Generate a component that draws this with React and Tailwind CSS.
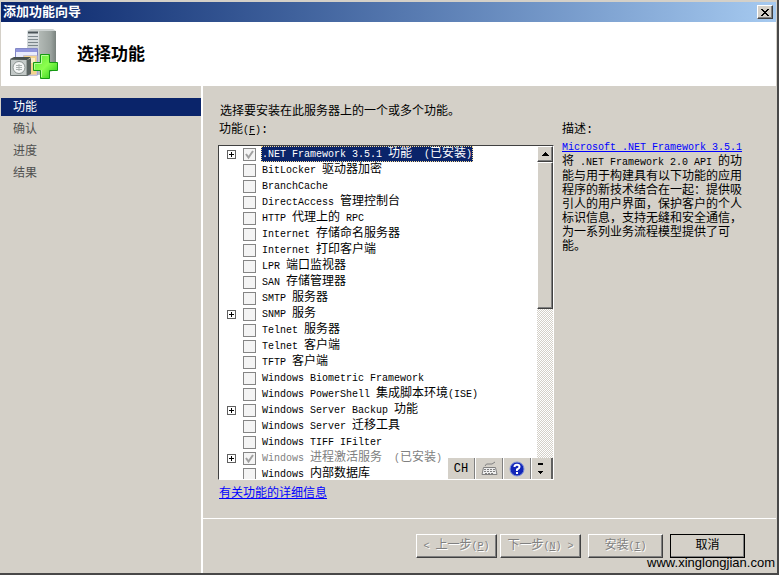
import React, { useState } from 'react';

const steps = ['功能', '确认', '进度', '结果'];

const features = [
    { name: '.NET Framework 3.5.1 功能  (已安装)', expandable: true, installed: true },
    { name: 'BitLocker 驱动器加密' },
    { name: 'BranchCache' },
    { name: 'DirectAccess 管理控制台' },
    { name: 'HTTP 代理上的 RPC' },
    { name: 'Internet 存储命名服务器' },
    { name: 'Internet 打印客户端' },
    { name: 'LPR 端口监视器' },
    { name: 'SAN 存储管理器' },
    { name: 'SMTP 服务器' },
    { name: 'SNMP 服务', expandable: true },
    { name: 'Telnet 服务器' },
    { name: 'Telnet 客户端' },
    { name: 'TFTP 客户端' },
    { name: 'Windows Biometric Framework' },
    { name: 'Windows PowerShell 集成脚本环境(ISE)' },
    { name: 'Windows Server Backup 功能', expandable: true },
    { name: 'Windows Server 迁移工具' },
    { name: 'Windows TIFF IFilter' },
    { name: 'Windows 进程激活服务  (已安装)', expandable: true, installed: true, dimmed: true },
    { name: 'Windows 内部数据库' },
];

// Latin runs are set smaller so that they take half the width of a Chinese character
const Mixed = ({ text }) =>
    text.split(/([\x20-\x7e]+)/).filter(Boolean).map((part, i) =>
        /^[\x20-\x7e]/.test(part) ? <span key={i} className="text-[10px]">{part}</span> : part
    );

const raised = 'border border-t-white border-l-white border-r-[#404040] border-b-[#404040] bg-[#d4d0c8] shadow-[inset_-1px_-1px_0_#808080]';

const ServerIcon = () => (
    <svg viewBox="0 0 50 50" className="w-[50px] h-[50px]" aria-hidden="true">
        <defs>
            <linearGradient id="side" x1="0" x2="1">
                <stop offset="0" stopColor="#b3bab6" />
                <stop offset="0.7" stopColor="#9aa29e" />
                <stop offset="1" stopColor="#79827e" />
            </linearGradient>
            <linearGradient id="front" x1="0" y1="0" x2="0" y2="1">
                <stop offset="0" stopColor="#dfe4e6" />
                <stop offset="1" stopColor="#b4bcc0" />
            </linearGradient>
            <linearGradient id="plus" x1="0" y1="0" x2="1" y2="1">
                <stop offset="0" stopColor="#5fe23a" />
                <stop offset="0.5" stopColor="#8cff4e" />
                <stop offset="1" stopColor="#1fc414" />
            </linearGradient>
        </defs>
        {/* tower */}
        <path d="M18 2 L30 1 V46 L18 43Z" fill="url(#front)" />
        <path d="M18 2 L22 0 H44 L47 2 L30 3Z" fill="#cdd3d2" />
        <path d="M30 2 L47 2 V41 L30 46Z" fill="url(#side)" />
        <path d="M19 3.500 H29" stroke="#4a5458" strokeWidth="2" />
        <path d="M19 7.500 H29 M19 10.500 H29 M19 13.500 H29 M19 16.500 H29" stroke="#7b868b" />
        {/* windows */}
        <path d="M6.500 19.500 H28.500 V46 H6.500Z" fill="#e9ecfd" stroke="#8388c6" />
        <rect x="7" y="20" width="21" height="3" fill="#9297dd" />
        <path d="M14.500 26.500 H28 V46 H14.500Z" fill="#f4d48c" stroke="#c9c3d6" />
        <path d="M17 29 H26 V34 H17Z" fill="#fbeec8" />
        {/* disc box */}
        <path d="M1.500 30.500 H18 V46.500 H1.500Z" fill="#c3c9c8" stroke="#6a7371" />
        <path d="M18 31 L22 29 V45 L18 47Z" fill="#5b6462" />
        <path d="M1 30 L5 28 H22 L18 31Z" fill="#48514f" />
        <circle cx="10" cy="38.500" r="6" fill="#f4f6f6" stroke="#89918f" />
        <path d="M7 36.500 H13 M7 38.500 H13 M7 40.500 H13 M10 35 V42" stroke="#aab1b0" />
        {/* plus */}
        <path d="M31.500 25.500 H40.500 V33.500 H48.500 V41.500 H40.500 V49.500 H31.500 V41.500 H24.500 V33.500 H31.500Z" fill="url(#plus)" stroke="#159a12" />
        <path d="M32.500 41 V48 M25.500 40.500 V34.500 H32.500 V26.500 H39" fill="none" stroke="#b8ff9a" />
    </svg>
);

const TitleBar = () => (
    <header className="h-5 shrink-0 flex items-center justify-between pl-[2px] pr-[3px] bg-linear-to-r from-[#0a246a] to-[#a6caf0]">
        <h1 className="pt-[2px] text-white text-[13px] font-bold leading-5">添加功能向导</h1>
        <button aria-label="关闭" className={`w-4 h-[14px] flex items-center justify-center ${raised}`}>
            <svg viewBox="0 0 8 7" className="w-2 h-[7px]" shapeRendering="crispEdges">
                <path d="M0 0h2v1h1v1h2V1h1V0h2v1H7v1H6v1H5v1h1v1h1v1h1v1H6V6H5V5H3v1H2v1H0V6h1V5h1V4h1V3H2V2H1V1H0z" fill="#000" />
            </svg>
        </button>
    </header>
);

const FeatureRow = ({ feature, id, selected, onSelect }) => (
    <li className="h-4 flex items-center">
        <span className="w-[24px] pl-2 flex">
            {feature.expandable && (
                <button aria-label="展开" className="w-[9px] h-[9px] border border-[#606060] bg-white flex items-center justify-center">
                    <svg viewBox="0 0 5 5" className="w-[5px] h-[5px] shrink-0" shapeRendering="crispEdges">
                        <path d="M0 2h5v1H0zM2 0h1v5H2z" fill="#000" />
                    </svg>
                </button>
            )}
        </span>
        <span className="grid w-[13px] h-[13px]">
            <input
                id={id}
                type="checkbox"
                defaultChecked={feature.installed}
                className="appearance-none w-[13px] h-[13px] border border-[#858585] bg-[#f4f4f4] col-start-1 row-start-1"
            />
            {feature.installed && (
                <svg viewBox="0 0 13 13" className="w-[13px] h-[13px] col-start-1 row-start-1 pointer-events-none">
                    <path d="M3 6 L5.500 9.500 L10 3" fill="none" stroke="#a0a0a0" strokeWidth="2" />
                </svg>
            )}
        </span>
        <label
            htmlFor={id}
            onClick={onSelect}
            className={`ml-[5px] px-px h-4 leading-4 whitespace-pre ${
                selected ? 'bg-[#0a246a] text-white outline-1 -outline-offset-1 outline-dotted outline-[#f5db95]' : feature.dimmed ? 'text-[#808080]' : 'text-black'
            }`}
        >
            <Mixed text={feature.name} />
        </label>
    </li>
);

const ScrollBar = () => (
    <div className="w-4 shrink-0 flex flex-col bg-[conic-gradient(#fff_25%,#d4d0c8_0_50%,#fff_0_75%,#d4d0c8_0)] bg-[length:2px_2px]">
        <button aria-label="向上滚动" className={`h-4 shrink-0 flex items-center justify-center ${raised}`}>
            <svg viewBox="0 0 7 4" className="w-[7px] h-1" shapeRendering="crispEdges">
                <path d="M3 0h1v1h1v1h1v1h1v1H0V3h1V2h1V1h1z" fill="#000" />
            </svg>
        </button>
        <div className={`h-[44%] ${raised}`}></div>
    </div>
);

const LanguageBar = () => (
    <div className="absolute right-0 bottom-0 h-[21px] flex bg-[#d4d0c8] border-l border-white">
        <button className="w-[27px] border-r border-[#808080]">CH</button>
        <button aria-label="键盘" className="w-7 border-l border-l-white border-r border-r-[#808080] flex items-center justify-center">
            <svg viewBox="0 0 17 15" className="w-[17px] h-[15px]" fill="none" stroke="#808080">
                <path d="M4 5 Q5 2 8 3 T14 1" />
                <path d="M2.500 6.500 H14.500 L16 13.500 H1Z" fill="#eee" />
                <path d="M3 8.500 H14 M3 10.500 H14 M4 12.500 H13" strokeDasharray="2 1" />
            </svg>
        </button>
        <button aria-label="帮助" className="w-7 border-l border-l-white border-r border-r-[#808080] flex items-center justify-center">
            <svg viewBox="0 0 16 16" className="w-4 h-4">
                <circle cx="8" cy="8" r="7" fill="#1226b8" stroke="#7c8fd8" />
                <path d="M5.500 6 Q5.500 3.700 8 3.700 T10.500 6 Q10.500 7.200 8 8.500 V10" fill="none" stroke="#fff" strokeWidth="2" />
                <rect x="7" y="11" width="2" height="2" fill="#fff" />
            </svg>
        </button>
        <button aria-label="选项" className="w-[22px] border-l border-l-white border-r-2 border-r-[#606060] flex items-center pl-[5px]">
            <svg viewBox="0 0 7 12" className="w-[7px] h-3" shapeRendering="crispEdges">
                <path d="M1 0h5v2H1zM1 8h5v1H5v1H4v1H3v-1H2V9H1z" fill="#000" />
            </svg>
        </button>
    </div>
);

const WizardButton = ({ children, className, ...rest }) => (
    <button
        className={`h-6 ${raised} disabled:text-[#808080] disabled:[text-shadow:1px_1px_0_#fff] whitespace-pre ${className}`}
        {...rest}
    >
        {children}
    </button>
);

const Key = ({ letter }) => <span className="text-[10px]">(<u>{letter}</u>)</span>;

export default function App() {
    const [selected, setSelected] = useState(0);

    return (
        <div className="h-screen flex flex-col overflow-hidden bg-[#d4d0c8] text-black text-[12px] leading-[14px] font-['Liberation_Mono','Noto_Sans_CJK_SC',monospace] pt-[2px] px-px border-r-2 border-b-2 border-[#484848]">
            <TitleBar />
            <div className="h-16 shrink-0 flex items-center bg-white pl-2">
                <ServerIcon />
                <h2 className="ml-[18px] pt-1 text-[17px] leading-6 font-bold">选择功能</h2>
            </div>

            <div className="flex-1 min-h-0 flex">
                <nav className="w-[200px] shrink-0 pt-3">
                    <ul className="space-y-1">
                        {steps.map((step, i) => (
                            <li key={step} className={`h-[18px] leading-5 pl-3 ${i === 0 ? 'bg-[#0a246a] text-white' : 'text-[#505050]'}`}>
                                {step}
                            </li>
                        ))}
                    </ul>
                </nav>

                <div className="flex-1 min-w-0 flex flex-col border-l-2 border-white">
                    <main className="flex-1 min-h-0 flex pl-[15px] pr-6">
                        <section className="w-[336px] shrink-0 flex flex-col pt-[17px]">
                            <p className="pl-[2px] leading-[18px]">选择要安装在此服务器上的一个或多个功能。</p>
                            <p id="features-label" className="pl-px leading-[18px]">功能<Key letter="F" />:</p>
                            <div className="relative mt-[5px] flex-1 min-h-0 flex bg-white border border-t-[#404040] border-l-[#404040] border-r-white border-b-white">
                                <ul aria-labelledby="features-label" className="flex-1 overflow-hidden">
                                    {features.map((feature, i) => (
                                        <FeatureRow
                                            key={feature.name}
                                            id={`feature-${i}`}
                                            feature={feature}
                                            selected={selected === i}
                                            onSelect={() => setSelected(i)}
                                        />
                                    ))}
                                </ul>
                                <ScrollBar />
                                <LanguageBar />
                            </div>
                            <a href="#details" className="self-start mt-[6px] mb-4 ml-px text-[#0000ff] underline leading-4">有关功能的详细信息</a>
                        </section>

                        <section className="flex-1 min-w-0 pl-2 pt-[35px]">
                            <h3 className="leading-[18px]">描述:</h3>
                            <div className="mt-[2px] w-[188px]">
                                <a href="#net" className="block text-[#0000ff] underline text-[10px] leading-[14px] whitespace-nowrap">Microsoft .NET Framework 3.5.1</a>
                                <p>
                                    <Mixed text="将 .NET Framework 2.0 API 的功" />
                                    <br />
                                    能与用于构建具有以下功能的应用程序的新技术结合在一起：提供吸引人的用户界面，保护客户的个人标识信息，支持无缝和安全通信，为一系列业务流程模型提供了可能。
                                </p>
                            </div>
                        </section>
                    </main>

                    <footer className="h-[55px] shrink-0 border-t border-white pt-[15px] pr-[31px] flex justify-end items-start relative">
                        <WizardButton disabled className="w-[81px]"><Mixed text="< 上一步" /><Key letter="P" /></WizardButton>
                        <WizardButton disabled className="w-[81px] ml-[3px]">下一步<Key letter="N" /><Mixed text=" >" /></WizardButton>
                        <WizardButton disabled className="w-[75px] ml-[7px]">安装<Key letter="I" /></WizardButton>
                        <WizardButton className="w-[75px] ml-[7px] outline-1 -outline-offset-1 outline-black">取消</WizardButton>
                        <span className="absolute right-px bottom-[2px] text-[13px] leading-4 font-['Liberation_Sans',sans-serif]">www.xinglongjian.com</span>
                    </footer>
                </div>
            </div>
        </div>
    );
}
